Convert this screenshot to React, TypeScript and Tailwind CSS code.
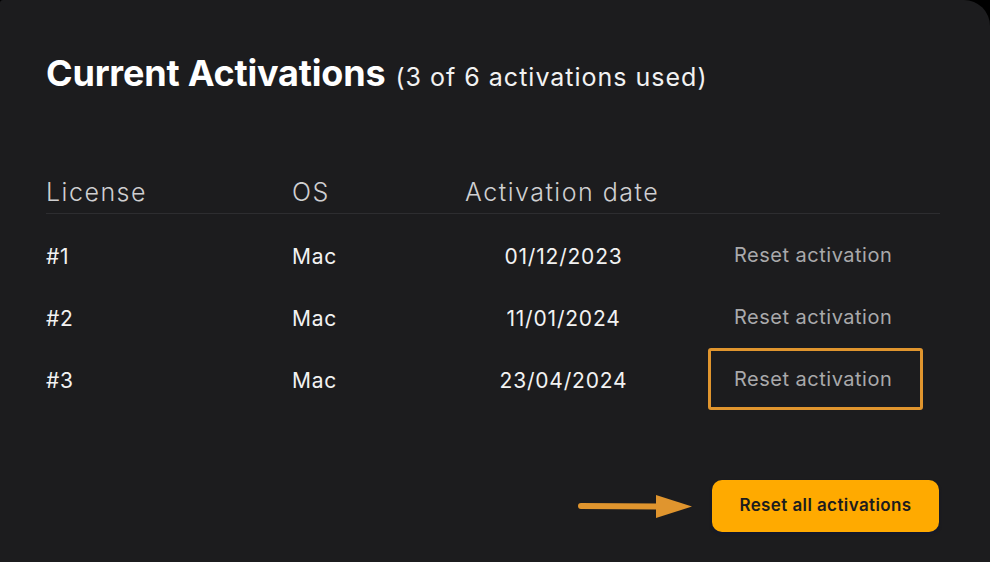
import React from 'react';

type Activation = { id: string; os: string; date: string; highlighted?: boolean };

const activations: Activation[] = [
    { id: '#1', os: 'Mac', date: '01/12/2023' },
    { id: '#2', os: 'Mac', date: '11/01/2024' },
    { id: '#3', os: 'Mac', date: '23/04/2024', highlighted: true },
];

const Arrow = () => (
    <svg width="116" height="30" viewBox="0 0 116 30" className="flex-shrink-0">
        <path d="M3 15 L80 15.6" stroke="#e0952e" strokeWidth="6" strokeLinecap="round" />
        <path d="M78 4 L114 15.5 L78 27 Z" fill="#e0952e" />
    </svg>
);

export default function App() {
    return (
        <div className="w-[990px] h-[562px] bg-black overflow-hidden" style={{ fontFamily: 'Inter, "Liberation Sans", sans-serif' }}>
            <div className="w-full h-full bg-[#1c1c1e] rounded-tr-[26px] rounded-tl-[3px] pl-[46px] pr-[50px] pt-[51px]">
                <h1 className="h-[44px] flex items-baseline gap-[10px] text-white">
                    <span className="text-[36px] font-bold tracking-[-0.2px] leading-[44px]">Current Activations</span>
                    <span className="text-[25px] font-normal tracking-[1px] leading-[44px] text-[#f2f2f2]">(3 of 6 activations used)</span>
                </h1>

                <div className="mt-[81px] grid grid-cols-[246px_173px_197px_1fr] border-b border-[#2d2d30] pb-[5px] text-[25px] tracking-[1.5px] leading-[32px] text-[#cfcfd1] font-light">
                    <div>License</div>
                    <div>OS</div>
                    <div className="whitespace-nowrap">Activation date</div>
                    <div />
                </div>

                <div className="mt-[12px]">
                    {activations.map(a => (
                        <div key={a.id} className="grid grid-cols-[246px_173px_197px_1fr] h-[62px] items-center text-[21px] tracking-[0.8px] text-[#f2f2f2]">
                            <div>{a.id}</div>
                            <div>{a.os}</div>
                            <div className="text-center">{a.date}</div>
                            <div className="pl-[46px]">
                                <button
                                    type="button"
                                    className={`h-[62px] -translate-y-[2px] pl-[23px] pr-[28px] flex items-center border-[3px] rounded-[3px] text-[20px] tracking-[0.5px] whitespace-nowrap text-[#a9a9ab] ${a.highlighted ? 'border-[#e0952e]' : 'border-transparent'}`}
                                >
                                    Reset activation
                                </button>
                            </div>
                        </div>
                    ))}
                </div>

                <div className="mt-[68px] flex items-center justify-end gap-[18px]">
                    <Arrow />
                    <button
                        type="button"
                        className="w-[227px] h-[52px] mr-[1px] rounded-[10px] bg-[#ffaa00] text-[17px] tracking-[0.4px] font-semibold text-[#1c1c1e] shadow-[0_2px_3px_rgba(10,20,60,0.6)]"
                    >
                        Reset all activations
                    </button>
                </div>
            </div>
        </div>
    );
}
